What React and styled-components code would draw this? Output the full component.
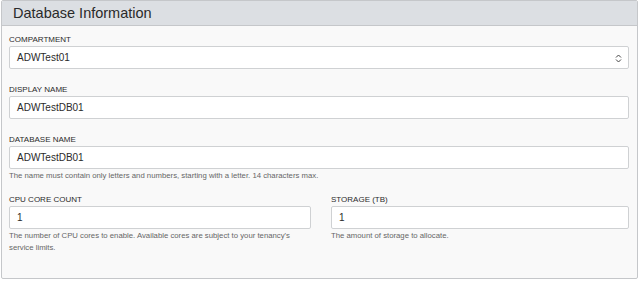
import React from "react";
import styled, { createGlobalStyle } from "styled-components";

const Global = createGlobalStyle`
  body {
    margin: 0;
    background: #fff;
    font-family: "Liberation Sans", Arial, sans-serif;
  }
`;

const Panel = styled.section`
  width: 637px;
  height: 279px;
  margin: 0 0 0 1px;
  border: 1px solid #c5c7ca;
  border-radius: 2px;
  background: #f9f9f9;
  box-sizing: border-box;
  overflow: hidden;
`;

const Header = styled.div`
  height: 25px;
  box-sizing: border-box;
  background: #dcdfe3;
  border-bottom: 1px solid #c5c7ca;
  padding-left: 11px;
  display: flex;
  align-items: center;
`;

const Title = styled.h2`
  margin: 0;
  font-weight: 400;
  font-size: 14.5px;
  color: #2a2a2a;
`;

const Body = styled.div`
  padding: 9px 8px 0 7px;
  display: flex;
  flex-direction: column;
  gap: 16px;
`;

const Row = styled.div`
  display: grid;
  grid-template-columns: 302px 1fr;
  column-gap: 20px;
  margin-top: -3px;
`;

const Field = styled.div`
  display: flex;
  flex-direction: column;
`;

const Label = styled.label`
  font-size: 8px;
  line-height: 10px;
  color: #2b2b2b;
  text-transform: uppercase;
  margin-bottom: 1px;
`;

const Box = styled.div`
  position: relative;
  height: 23px;
  box-sizing: border-box;
  background: #fff;
  border: 1px solid #cfd1d3;
  border-radius: 2px;
  padding: 0 7px;
  display: flex;
  align-items: center;
  font-size: 10px;
  color: #2a2a2a;
`;

const Chevrons = styled.svg`
  position: absolute;
  right: 6px;
  top: 7px;
`;

const Help = styled.div`
  font-size: 7.75px;
  line-height: 12px;
  color: #666;
  margin-top: 1px;
  max-width: ${(p) => p.$max || "none"};
`;

const SelectArrows = () => (
  <Chevrons width="7" height="9" viewBox="0 0 7 9" fill="none" stroke="#444" strokeWidth="1">
    <path d="M1 3.5 L3.5 1 L6 3.5" />
    <path d="M1 5.5 L3.5 8 L6 5.5" />
  </Chevrons>
);

const App = () => (
  <>
    <Global />
    <Panel>
      <Header>
        <Title>Database Information</Title>
      </Header>
      <Body>
        <Field>
          <Label>Compartment</Label>
          <Box>
            ADWTest01
            <SelectArrows />
          </Box>
        </Field>
        <Field>
          <Label>Display Name</Label>
          <Box>ADWTestDB01</Box>
        </Field>
        <Field>
          <Label>Database Name</Label>
          <Box>ADWTestDB01</Box>
          <Help>The name must contain only letters and numbers, starting with a letter. 14 characters max.</Help>
        </Field>
        <Row>
          <Field>
            <Label>CPU Core Count</Label>
            <Box>1</Box>
            <Help $max="290px">
              The number of CPU cores to enable. Available cores are subject to your tenancy's service limits.
            </Help>
          </Field>
          <Field>
            <Label>Storage (TB)</Label>
            <Box>1</Box>
            <Help>The amount of storage to allocate.</Help>
          </Field>
        </Row>
      </Body>
    </Panel>
  </>
);

export default App;
